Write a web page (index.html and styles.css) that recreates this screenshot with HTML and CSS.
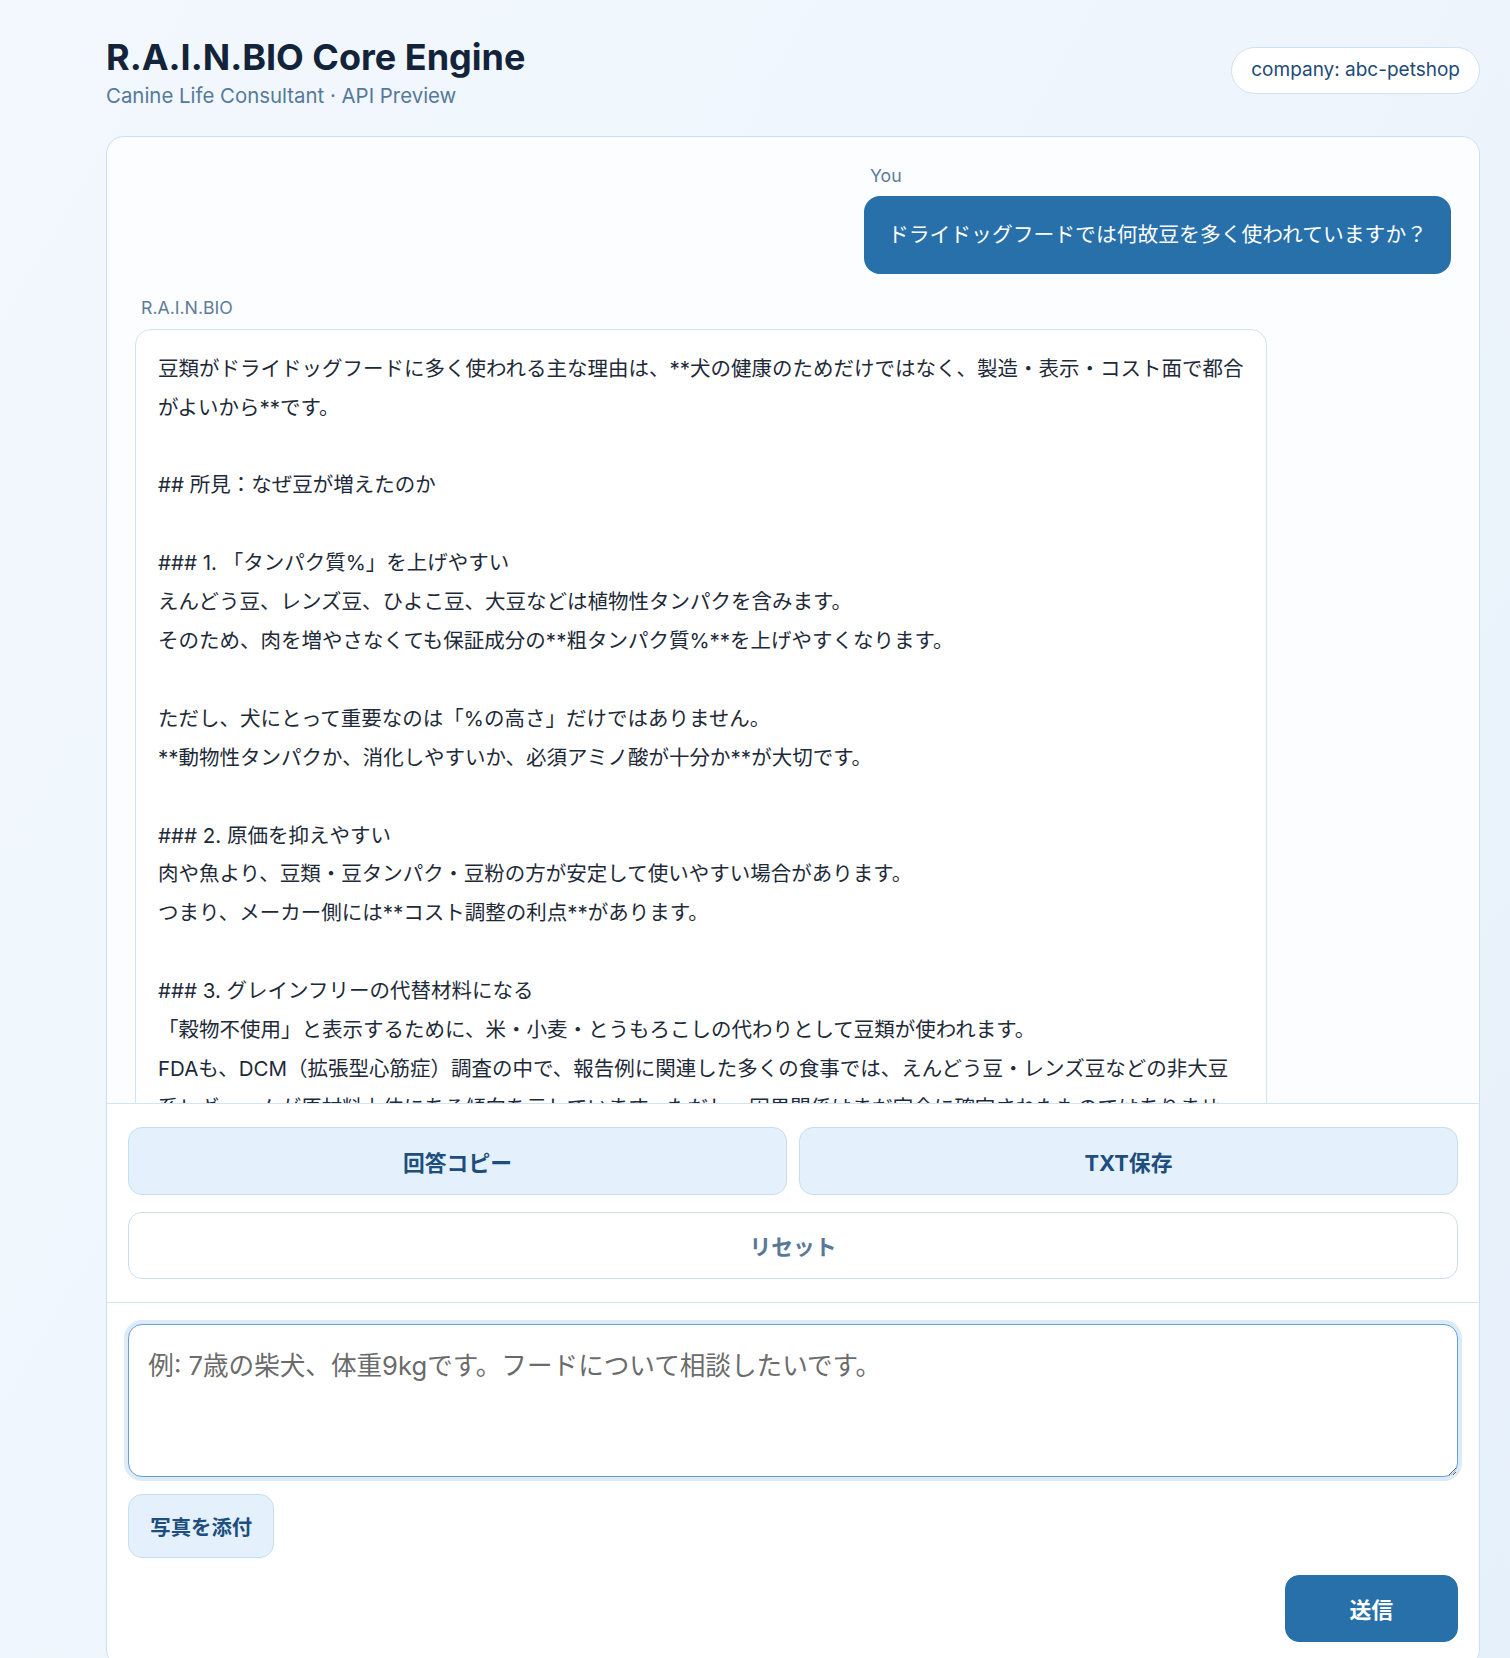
FILE: index.html
```html
<!DOCTYPE html>
<html lang="ja">
<head>
<meta charset="utf-8">
<title>R.A.I.N.BIO Core Engine</title>
<link rel="stylesheet" href="styles.css">
</head>
<body>
<div class="page">
  <header class="top">
    <div class="brand">
      <h1 class="title">R.A.I.N.BIO Core Engine</h1>
      <p class="subtitle">Canine Life Consultant · API Preview</p>
    </div>
    <span class="pill">company: abc-petshop</span>
  </header>

  <main class="card">
    <section class="messages">
      <div class="msg msg-user">
        <div class="label">You</div>
        <div class="bubble">ドライドッグフードでは何故豆を多く使われていますか？</div>
      </div>
      <div class="msg msg-bot">
        <div class="label">R.A.I.N.BIO</div>
        <div class="answer">豆類がドライドッグフードに多く使われる主な理由は、**犬の健康のためだけではなく、製造・表示・コスト面で都合がよいから**です。

## 所見：なぜ豆が増えたのか

### 1. 「タンパク質%」を上げやすい
えんどう豆、レンズ豆、ひよこ豆、大豆などは植物性タンパクを含みます。
そのため、肉を増やさなくても保証成分の**粗タンパク質%**を上げやすくなります。

ただし、犬にとって重要なのは「%の高さ」だけではありません。
**動物性タンパクか、消化しやすいか、必須アミノ酸が十分か**が大切です。

### 2. 原価を抑えやすい
肉や魚より、豆類・豆タンパク・豆粉の方が安定して使いやすい場合があります。
つまり、メーカー側には**コスト調整の利点**があります。

### 3. グレインフリーの代替材料になる
「穀物不使用」と表示するために、米・小麦・とうもろこしの代わりとして豆類が使われます。
FDAも、DCM（拡張型心筋症）調査の中で、報告例に関連した多くの食事では、えんどう豆・レンズ豆などの非大豆系レギュームが原材料上位にある傾向を示しています。ただし、因果関係はまだ完全に確定されたものではありません。</div>
      </div>
    </section>

    <section class="actions">
      <button class="btn btn-soft" type="button">回答コピー</button>
      <button class="btn btn-soft" type="button">TXT保存</button>
      <button class="btn btn-ghost btn-wide" type="button">リセット</button>
    </section>

    <section class="composer">
      <textarea class="input" placeholder="例: 7歳の柴犬、体重9kgです。フードについて相談したいです。"></textarea>
      <div class="attach-row">
        <button class="btn btn-soft btn-attach" type="button">写真を添付</button>
      </div>
      <div class="send-row">
        <button class="btn btn-primary btn-send" type="button">送信</button>
      </div>
    </section>
  </main>
</div>
</body>
</html>
```

FILE: styles.css
```css
* {
  box-sizing: border-box;
}

html,
body {
  margin: 0;
  height: 1658px;
  overflow: hidden;
}

body {
  font-family: Inter, "Noto Sans CJK JP", "Noto Sans", sans-serif;
  background: linear-gradient(120deg, #f2f8fd 0%, #eef5fc 55%, #e6f0fa 100%);
  color: #1e2a38;
}

.page {
  padding: 36px 30px 0 106px;
}

/* Header */
.top {
  display: flex;
  justify-content: space-between;
  align-items: center;
  margin-bottom: 26.6px;
}

.title {
  margin: 0;
  font-size: 36px;
  line-height: 42px;
  font-weight: 700;
  color: #13243a;
  letter-spacing: 0;
}

.subtitle {
  margin: 3.6px 0 0;
  font-size: 20.4px;
  line-height: 28px;
  color: #56799b;
}

.pill {
  margin-top: -5px;
  padding: 11px 19px;
  border: 1px solid #cfe2f3;
  border-radius: 999px;
  background: #ffffff;
  color: #1d4a78;
  font-size: 19px;
  line-height: 22.5px;
}

/* Card */
.card {
  border: 1px solid #cde0f0;
  border-radius: 18px;
  background: #fcfdff;
  overflow: hidden;
}

.messages {
  height: 966px;
  padding: 26.5px 28px 0;
  overflow: hidden;
  display: flex;
  flex-direction: column;
  gap: 22px;
}

.msg {
  display: flex;
  flex-direction: column;
  max-width: 86%;
}

.msg-user {
  align-self: flex-end;
}

.msg-bot {
  align-self: flex-start;
  width: 86%;
}

.label {
  padding: 0 6px;
  margin-bottom: 8px;
  font-size: 17.7px;
  line-height: 24.5px;
  color: #5e7c98;
}

.bubble {
  background: #2870aa;
  color: #ffffff;
  padding: 19.6px 24px;
  border-radius: 16px;
  font-size: 20.8px;
  line-height: 38.8px;
}

.answer {
  background: #ffffff;
  border: 1px solid #d2e3f1;
  border-radius: 16px;
  padding: 20px 22px 18px;
  font-size: 20.5px;
  line-height: 38.9px;
  white-space: pre-wrap;
  color: #1e2a38;
}

/* Buttons */
.btn {
  font-family: Inter, "Noto Sans CJK JP", sans-serif;
  font-weight: 700;
  font-size: 21.8px;
  border-radius: 14px;
  cursor: pointer;
}

.btn-soft {
  background: #e4f1fd;
  border: 1px solid #c6def1;
  color: #1d4e7e;
}

.btn-ghost {
  background: #ffffff;
  border: 1px solid #c9dff0;
  color: #5a7997;
}

.btn-primary {
  background: #2870aa;
  border: 1px solid #2870aa;
  color: #ffffff;
}

/* Actions */
.actions {
  border-top: 1px solid #d3e4f2;
  background: #ffffff;
  padding: 23px 21.3px 22.5px;
  display: grid;
  grid-template-columns: 1fr 1fr;
  column-gap: 12.6px;
  row-gap: 16.8px;
}

.actions .btn {
  height: 67.7px;
}

.btn-wide {
  grid-column: 1 / span 2;
}

/* Composer */
.composer {
  border-top: 1px solid #d3e4f2;
  background: #ffffff;
  padding: 21.3px 21.3px 24px;
  display: flex;
  flex-direction: column;
  gap: 17px;
}

.input {
  display: block;
  width: 100%;
  height: 153px;
  padding: 19px 19px;
  border: 1.4px solid #62a2d8;
  border-radius: 14px;
  box-shadow: 0 0 0 4px #dcebf7;
  outline: none;
  resize: vertical;
  font-family: Inter, "Noto Sans CJK JP", sans-serif;
  font-size: 25.6px;
  line-height: 44px;
  color: #1e2a38;
  background: #ffffff;
}

.input::placeholder {
  color: #6b6b6b;
}

.attach-row {
  display: flex;
}

.btn-attach {
  height: 63.6px;
  padding: 0 21px;
  font-size: 20.4px;
}

.send-row {
  display: flex;
  justify-content: flex-end;
}

.btn-send {
  width: 173px;
  height: 67.7px;
}
```
